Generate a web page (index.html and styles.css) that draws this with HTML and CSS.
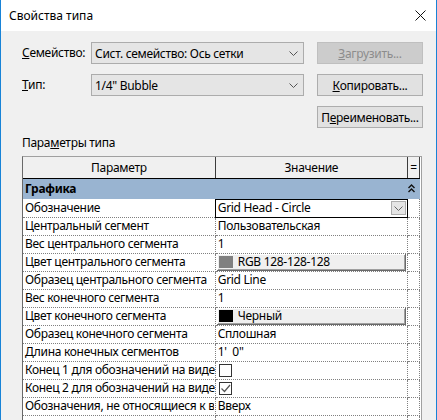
FILE: index.html
```html
<!DOCTYPE html>
<html lang="ru">
<head>
<meta charset="utf-8">
<title>Свойства типа</title>
<link rel="stylesheet" href="styles.css">
</head>
<body>
<div class="window">
  <div class="titlebar">
    <span class="title">Свойства типа</span>
    <svg class="close" width="11" height="11" viewBox="0 0 11 11"><path d="M0.5 0.5 L10.5 10.5 M10.5 0.5 L0.5 10.5" stroke="#111" stroke-width="1" fill="none"/></svg>
  </div>
  <div class="content">
    <div class="form">
      <span class="lbl"><u>С</u>емейство:</span>
      <div class="combo"><span>Сист. семейство: Ось сетки</span><svg class="chev" width="9" height="5" viewBox="0 0 9 5"><path d="M0.5 0.5 L4.5 4.5 L8.5 0.5" stroke="#555" fill="none"/></svg></div>
      <div class="btn disabled"><u>З</u>агрузить...</div>
      <span class="lbl"><u>Т</u>ип:</span>
      <div class="combo"><span>1/4" Bubble</span><svg class="chev" width="9" height="5" viewBox="0 0 9 5"><path d="M0.5 0.5 L4.5 4.5 L8.5 0.5" stroke="#555" fill="none"/></svg></div>
      <div class="btn"><u>К</u>опировать...</div>
      <div class="btn col3">П<u>е</u>реименовать...</div>
    </div>
    <div class="section-label">Пара<u>м</u>етры типа</div>
    <div class="gridbox">
      <table class="props">
        <colgroup><col class="c1"><col class="c2"><col class="c3"></colgroup>
        <thead>
          <tr><th>Параметр</th><th>Значение</th><th>=</th></tr>
        </thead>
        <tbody>
          <tr class="group"><td colspan="2">Графика</td><td class="gicon"><svg width="7" height="9" viewBox="0 0 7 9"><path d="M0.5 4 L3.5 1 L6.5 4 M0.5 8 L3.5 5 L6.5 8" stroke="#111" stroke-width="1.4" fill="none"/></svg></td></tr>
          <tr><td>Обозначение</td><td class="dd"><div class="ddwrap"><span>Grid Head - Circle</span><span class="ddbtn"><svg width="9" height="5" viewBox="0 0 9 5"><path d="M0.5 0.5 L4.5 4.5 L8.5 0.5" stroke="#666" fill="none"/></svg></span></div></td><td></td></tr>
          <tr><td>Центральный сегмент</td><td>Пользовательская</td><td></td></tr>
          <tr><td>Вес центрального сегмента</td><td>1</td><td></td></tr>
          <tr><td>Цвет центрального сегмента</td><td class="colorcell"><div class="colorbtn"><span class="swatch grey"></span><span>RGB 128-128-128</span></div></td><td></td></tr>
          <tr><td>Образец центрального сегмента</td><td>Grid Line</td><td></td></tr>
          <tr><td>Вес конечного сегмента</td><td>1</td><td></td></tr>
          <tr><td>Цвет конечного сегмента</td><td class="colorcell"><div class="colorbtn"><span class="swatch black"></span><span>Черный</span></div></td><td></td></tr>
          <tr><td>Образец конечного сегмента</td><td>Сплошная</td><td></td></tr>
          <tr><td>Длина конечных сегментов</td><td>1'&nbsp;&nbsp;0"</td><td></td></tr>
          <tr><td>Конец 1 для обозначений на виде</td><td><span class="check"></span></td><td></td></tr>
          <tr><td>Конец 2 для обозначений на виде</td><td><span class="check"><svg width="11" height="11" viewBox="0 0 11 11"><path d="M1.5 5.5 L4.5 8.5 L10 2" stroke="#555" stroke-width="1.2" fill="none"/></svg></span></td><td></td></tr>
          <tr><td><div class="clip">Обозначения, не относящиеся к виду</div></td><td>Вверх</td><td></td></tr>
          <tr><td></td><td></td><td></td></tr>
        </tbody>
      </table>
    </div>
  </div>
</div>
</body>
</html>
```

FILE: styles.css
```css
* { box-sizing: border-box; }
html, body { margin: 0; padding: 0; }
body {
  font-family: "Noto Sans", sans-serif;
  font-size: 12px;
  letter-spacing: -0.3px;
  color: #000;
  background: #f0f0f0;
}
.window {
  width: 437px;
  height: 420px;
  overflow: hidden;
  border-left: 1px solid #1883d7;
  border-right: 1px solid #1883d7;
  background: #f0f0f0;
  display: flex;
  flex-direction: column;
}
.titlebar {
  height: 31px;
  flex: none;
  background: #fff;
  display: flex;
  align-items: center;
  justify-content: space-between;
  padding: 0 10px 0 8px;
}
.title { font-size: 12px; letter-spacing: 0; }
.close { display: block; }
.content {
  padding: 11px 13px 0 21px;
  flex: 1;
  min-height: 0;
  display: flex;
  flex-direction: column;
}
.form {
  display: grid;
  grid-template-columns: 56px 213px 106px;
  grid-auto-rows: 22px;
  column-gap: 13px;
  row-gap: 10px;
  align-items: center;
}
.lbl { line-height: 16px; white-space: nowrap; }
.combo {
  height: 22px;
  background: #e5e5e5;
  border: 1px solid #acacac;
  display: flex;
  align-items: center;
  justify-content: space-between;
  padding: 0 5px 0 3px;
}
.chev { display: block; }
.btn {
  height: 22px;
  background: #e1e1e1;
  border: 1px solid #adadad;
  display: flex;
  align-items: center;
  justify-content: center;
}
.btn.disabled {
  background: #cccccc;
  border-color: #bfbfbf;
  color: #8c8c8c;
}
.btn.col3 { grid-column: 3; }
.section-label {
  margin: 7px 0 5px 0;
  line-height: 16px;
}
.gridbox {
  flex: 1;
  width: 400px;
  background: #fff;
  border: 1px solid #a0a0a0;
  border-left-color: #696969;
  border-bottom: none;
}
.props {
  width: 397px;
  table-layout: fixed;
  border-collapse: collapse;
}
.c1 { width: 192px; }
.c2 { width: 192px; }
.c3 { width: 12px; }
.props th {
  height: 21px;
  padding: 0;
  font-weight: normal;
  background: #f0f0f0;
  border-right: 1px solid #3c3c3c;
  border-bottom: 1px solid #000;
  text-align: center;
}
.props td {
  height: 18px;
  padding: 0 0 0 2px;
  border-right: 1px dotted #808080;
  border-bottom: 1px dotted #808080;
  white-space: nowrap;
  overflow: hidden;
  line-height: 16px;
}
.clip { overflow: hidden; white-space: nowrap; width: 189px; }
.props tr.group td {
  height: 21px;
  background: #99b4d1;
  border: none;
  font-weight: bold;
}
.props td.gicon { padding: 0 0 0 1px; }
.gicon svg { display: block; }
.props td.dd {
  border: 1px solid #000;
  padding: 0;
}
.ddwrap {
  display: flex;
  align-items: center;
  justify-content: space-between;
  height: 16px;
  padding-left: 2px;
}
.ddbtn {
  width: 15px;
  height: 14px;
  margin-right: 1px;
  background: #e5e5e5;
  border: 1px solid #adadad;
  display: flex;
  align-items: center;
  justify-content: center;
}
.ddbtn svg { display: block; }
.props td.colorcell { padding: 0 1px 0 1px; }
.colorbtn {
  height: 17px;
  display: flex;
  align-items: center;
  gap: 5px;
  padding-left: 2px;
  background: #f0f0f0;
  box-shadow: inset -1px -1px 0 #696969, inset 1px 1px 0 #fff, inset -2px -2px 0 #a0a0a0;
}
.swatch {
  width: 14px;
  height: 12px;
  display: block;
}
.swatch.grey { background: #808080; }
.swatch.black { background: #000; }
.check {
  display: block;
  width: 13px;
  height: 13px;
  margin-left: 1px;
  border: 1px solid #333;
  background: #fff;
}
.check svg { display: block; }
u { text-decoration: underline; text-underline-offset: 1px; }
```
